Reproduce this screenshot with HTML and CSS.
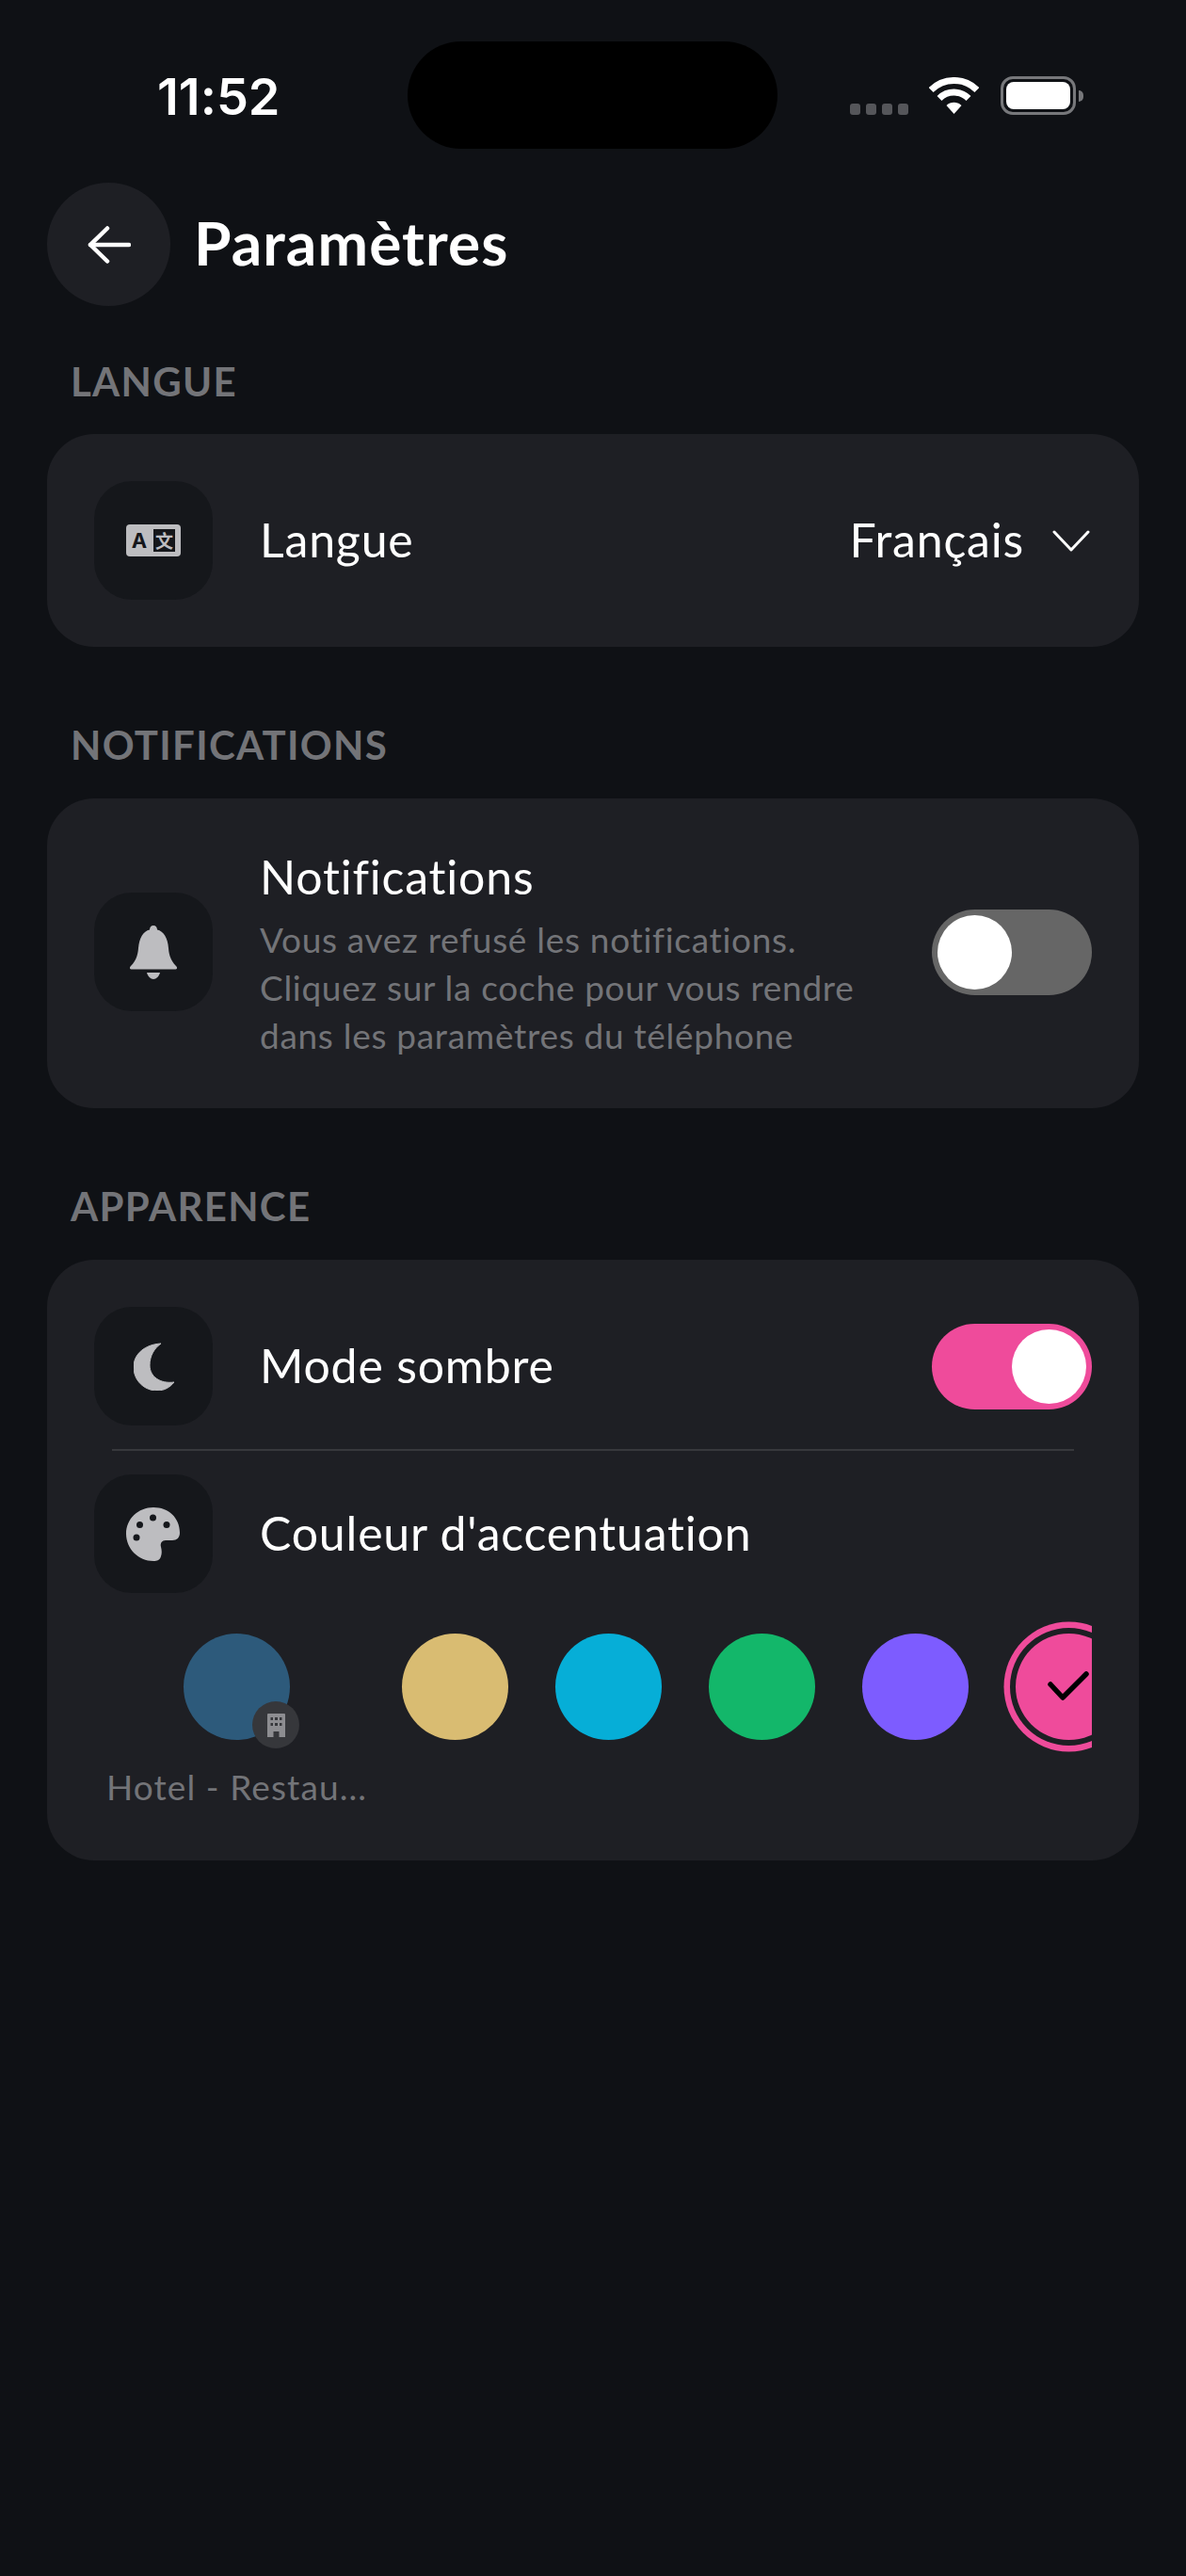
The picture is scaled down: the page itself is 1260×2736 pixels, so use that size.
FILE: index.html
```html
<!DOCTYPE html>
<html lang="fr">
<head>
  <meta charset="UTF-8" />
  <meta name="viewport" content="width=device-width, initial-scale=1.0"/>
  <title>Paramètres</title>
  <link rel="stylesheet" href="styles.css">
</head>
<body>

  <div class="status-bar">
    <span class="time">11:52</span>
    <div class="island"></div>
    <div class="status-icons">
      <div class="signal"><i></i><i></i><i></i><i></i></div>
      <svg class="wifi" width="53" height="39" viewBox="0 0 53 39">
        <path d="M2.100 13.600 A34.500 34.500 0 0 1 50.900 13.600" fill="none" stroke="#fff" stroke-width="7"/>
        <path d="M11 22.500 A22 22 0 0 1 42 22.500" fill="none" stroke="#fff" stroke-width="7"/>
        <path d="M18.500 30 A11.500 11.500 0 0 1 34.500 30 L26.500 39 Z" fill="#fff"/>
      </svg>
      <div class="battery"><div class="battery-fill"></div></div>
      <div class="battery-nub"></div>
    </div>
  </div>

  <header class="header">
    <button class="back">
      <svg width="46" height="40" viewBox="0 0 46 40" fill="none" stroke="#fff" stroke-width="4.500" stroke-linecap="round" stroke-linejoin="round">
        <path d="M44 20 H3"/><path d="M21 2.500 L3 20 L21 37.500"/>
      </svg>
    </button>
    <h1>Paramètres</h1>
  </header>

  <h2 class="section-title first">LANGUE</h2>
  <section class="card">
    <div class="row">
      <div class="icon-box">
        <svg width="58" height="34" viewBox="0 0 58 34">
          <rect width="58" height="34" rx="4" fill="#bdbdc0"/>
          <rect x="29" y="5" width="23" height="24" fill="#15171b"/>
          <text x="14" y="25" class="glyph-a">A</text>
          <text x="40.500" y="24.500" class="glyph-zh">文</text>
        </svg>
      </div>
      <span class="label">Langue</span>
      <span class="value">Français</span>
      <svg class="chevron" width="40" height="23" viewBox="0 0 40 23" fill="none" stroke="#fff" stroke-width="3" stroke-linecap="round" stroke-linejoin="round">
        <path d="M2 2 L20 21 L38 2"/>
      </svg>
    </div>
  </section>

  <h2 class="section-title">NOTIFICATIONS</h2>
  <section class="card card-notif">
    <div class="row">
      <div class="icon-box">
        <svg width="50" height="57" viewBox="0 0 50 57" fill="#bdbdc0">
          <path d="M25 0 C27.500 0 29 2 29 4.500 C36 6 40 13 41 24 C41.500 32 44 38 49 43 C51 45 50 46.500 48 46.500 H2 C0 46.500 -1 45 1 43 C6 38 8.500 32 9 24 C10 13 14 6 21 4.500 C21 2 22.500 0 25 0 Z"/>
          <path d="M18 50 H32 C31 54 28 57 25 57 C22 57 19 54 18 50 Z"/>
        </svg>
      </div>
      <div class="notif-text">
        <div class="label">Notifications</div>
        <p class="desc">Vous avez refusé les notifications.<br>Cliquez sur la coche pour vous rendre<br>dans les paramètres du téléphone</p>
      </div>
      <div class="toggle"><div class="knob"></div></div>
    </div>
  </section>

  <h2 class="section-title">APPARENCE</h2>
  <section class="card">
    <div class="row">
      <div class="icon-box">
        <svg width="43" height="51" viewBox="0 0 43 51" fill="#bdbdc0">
          <path d="M29 1 C12 2 0 12 0 26 C0 40 11 51 25 51 C33 51 39 47 43 42 C28 44 17 36 17 24 C17 14 22 6 29 1 Z" stroke="#bdbdc0" stroke-width="1" stroke-linejoin="round"/>
        </svg>
      </div>
      <span class="label">Mode sombre</span>
      <div class="toggle on"><div class="knob"></div></div>
    </div>
    <div class="divider"></div>
    <div class="row">
      <div class="icon-box">
        <svg width="58" height="57" viewBox="0 0 58 57">
          <path fill="#bdbdc0" d="M29 0 C45 0 57 11 57 27 C57 32 54 35 49 35 H42 C38 35 36 38 37 42 C38 46 38 49 37 52 C36 56 33 57 29 57 C13 57 0 44 0 28 C0 12 13 0 29 0 Z"/>
          <circle cx="14.500" cy="18.500" r="3.500" fill="#15171b"/>
          <circle cx="28.500" cy="11" r="3.500" fill="#15171b"/>
          <circle cx="43" cy="18.500" r="3.500" fill="#15171b"/>
          <circle cx="11" cy="32" r="3.500" fill="#15171b"/>
        </svg>
      </div>
      <span class="label">Couleur d'accentuation</span>
    </div>

    <div class="swatches">
      <div class="company">
        <div class="swatch swatch-company">
          <div class="company-badge">
            <svg width="19" height="25" viewBox="0 0 19 25">
              <path fill="#8d8d91" fill-rule="evenodd" d="M1 0 H18 A1 1 0 0 1 19 1 V25 H12.500 V19 H6.500 V25 H0 V1 A1 1 0 0 1 1 0 Z M3.500 4 V7 H6 V4 Z M8 4 V7 H11 V4 Z M13 4 V7 H15.500 V4 Z M3.500 10 V13 H6 V10 Z M8 10 V13 H11 V10 Z M13 10 V13 H15.500 V10 Z"/>
            </svg>
          </div>
        </div>
        <div class="company-name">Hotel - Restau...</div>
      </div>
      <div class="colors">
        <div class="swatch swatch-yellow"></div>
        <div class="swatch swatch-cyan"></div>
        <div class="swatch swatch-green"></div>
        <div class="swatch swatch-violet"></div>
        <div class="swatch swatch-pink selected">
          <svg width="45" height="33" viewBox="0 0 45 33" fill="none" stroke="#000" stroke-width="5.500" stroke-linecap="round" stroke-linejoin="round">
            <path d="M3 14 L16 28 L41 3"/>
          </svg>
        </div>
      </div>
    </div>
  </section>

</body>
</html>
```

FILE: styles.css
```css
:root {
  --bg-color: #0f1115;
  --card-color: #1e1f24;
  --box-color: #15171b;
  --muted: #737478;
  --pink: #ef4b9b;
}

* {
  box-sizing: border-box;
}

body {
  margin: 0;
  width: 1260px;
  height: 2736px;
  background-color: var(--bg-color);
  color: #fff;
  font-family: "Lato", "Noto Sans", sans-serif;
  font-variant-ligatures: none;
}

/* status bar */
.status-bar {
  display: flex;
  align-items: flex-start;
  padding: 44px 0 0 167px;
  height: 158px;
}

.time {
  width: 266px;
  margin-top: 30px;
  font-family: "Inter", sans-serif;
  font-weight: 600;
  font-size: 54px;
  line-height: 58px;
}

.island {
  width: 393px;
  height: 114px;
  border-radius: 57px;
  background: #000;
}

.status-icons {
  display: flex;
  align-items: flex-start;
  margin: 37px 0 0 77px;
}

.signal {
  display: flex;
  gap: 6px;
  margin: 29px 22px 0 0;
}

.signal i {
  width: 11px;
  height: 12px;
  border-radius: 3px;
  background: #55565a;
}

.wifi {
  margin: 1px 23px 0 0;
}

.battery {
  width: 80px;
  height: 41px;
  padding: 3px;
  border: 3px solid #77787b;
  border-radius: 13px;
}

.battery-fill {
  height: 29px;
  border-radius: 8px;
  background: #fff;
}

.battery-nub {
  width: 5px;
  height: 12px;
  margin: 15px 0 0 3px;
  border-radius: 0 6px 6px 0;
  background: #77787b;
}

/* header */
.header {
  display: flex;
  align-items: center;
  gap: 25px;
  margin: 36px 0 0 50px;
}

.back {
  display: flex;
  align-items: center;
  justify-content: center;
  width: 131px;
  height: 131px;
  padding: 0;
  border: none;
  border-radius: 50%;
  background: var(--card-color);
}

.header h1 {
  margin: 0 0 4px;
  font-size: 64px;
  font-weight: 700;
  letter-spacing: 1.100px;
}

/* sections */
.section-title {
  margin: 84px 0 37px 75px;
  color: var(--muted);
  font-size: 42px;
  font-weight: 700;
  line-height: 40px;
  letter-spacing: 1.300px;
}

.section-title.first {
  margin-top: 60px;
  margin-bottom: 36px;
}

.card {
  width: 1160px;
  margin-left: 50px;
  padding: 50px;
  border-radius: 50px;
  background: var(--card-color);
}

.card-notif {
  padding-top: 53px;
  padding-bottom: 52px;
}

.card-notif .icon-box,
.card-notif .toggle {
  margin-bottom: 4px;
}

.row {
  display: flex;
  align-items: center;
}

.row > .label,
.row > .value {
  margin-bottom: 3px;
}

.icon-box {
  display: flex;
  align-items: center;
  justify-content: center;
  flex-shrink: 0;
  width: 126px;
  height: 126px;
  margin-right: 50px;
  border-radius: 40px;
  background: var(--box-color);
}

.label {
  font-size: 50px;
  line-height: 60px;
  letter-spacing: 0.800px;
}

.value {
  margin-left: auto;
  font-size: 50px;
  line-height: 60px;
  letter-spacing: 0.800px;
}

.chevron {
  margin: 0 2px 0 30px;
}

.glyph-a {
  font-family: "Inter", sans-serif;
  font-size: 22px;
  font-weight: 700;
  fill: #15171b;
  text-anchor: middle;
}

.glyph-zh {
  font-family: "Noto Sans CJK SC", sans-serif;
  font-size: 19px;
  font-weight: 700;
  fill: #bdbdc0;
  text-anchor: middle;
}

.notif-text {
  flex: 1;
}

.desc {
  margin: 11px 0 0;
  color: var(--muted);
  font-size: 37px;
  line-height: 51px;
  letter-spacing: 0.700px;
}

/* toggles */
.toggle {
  display: flex;
  align-items: center;
  width: 170px;
  height: 91px;
  margin-left: auto;
  padding: 0 6px;
  border-radius: 46px;
  background: #666;
}

.knob {
  width: 79px;
  height: 79px;
  border-radius: 50%;
  background: #fff;
}

.toggle.on {
  justify-content: flex-end;
  background: var(--pink);
}

.divider {
  height: 2px;
  margin: 25px 19px;
  background: #37383c;
}

/* colour picker */
.swatches {
  display: flex;
  align-items: flex-start;
  gap: 39px;
  margin-top: 30px;
  padding: 13px 0 3px 15px;
  overflow: hidden;
}

.company {
  flex-shrink: 0;
  width: 273px;
}

.company-name {
  margin: 25px 0 0 -2px;
  color: var(--muted);
  font-size: 37px;
  line-height: 50px;
  letter-spacing: 1.100px;
  white-space: nowrap;
}

.colors {
  display: flex;
  gap: 50px;
  flex-shrink: 0;
}

.swatch {
  display: flex;
  align-items: center;
  justify-content: center;
  width: 113px;
  height: 113px;
  border-radius: 50%;
}

.swatch-company {
  position: relative;
  margin-left: 80px;
  background: #2d5a7b;
}

.company-badge {
  position: absolute;
  right: -10px;
  bottom: -9px;
  display: flex;
  align-items: center;
  justify-content: center;
  width: 50px;
  height: 50px;
  border-radius: 50%;
  background: #36373b;
}

.swatch-yellow { background: #d9bc72; }
.swatch-cyan { background: #06aed7; }
.swatch-green { background: #13b76a; }
.swatch-violet { background: #7d5cff; }

.swatch-pink {
  background: var(--pink);
}

.selected {
  box-shadow: 0 0 0 6px var(--card-color), 0 0 0 12.500px var(--pink);
}
```
